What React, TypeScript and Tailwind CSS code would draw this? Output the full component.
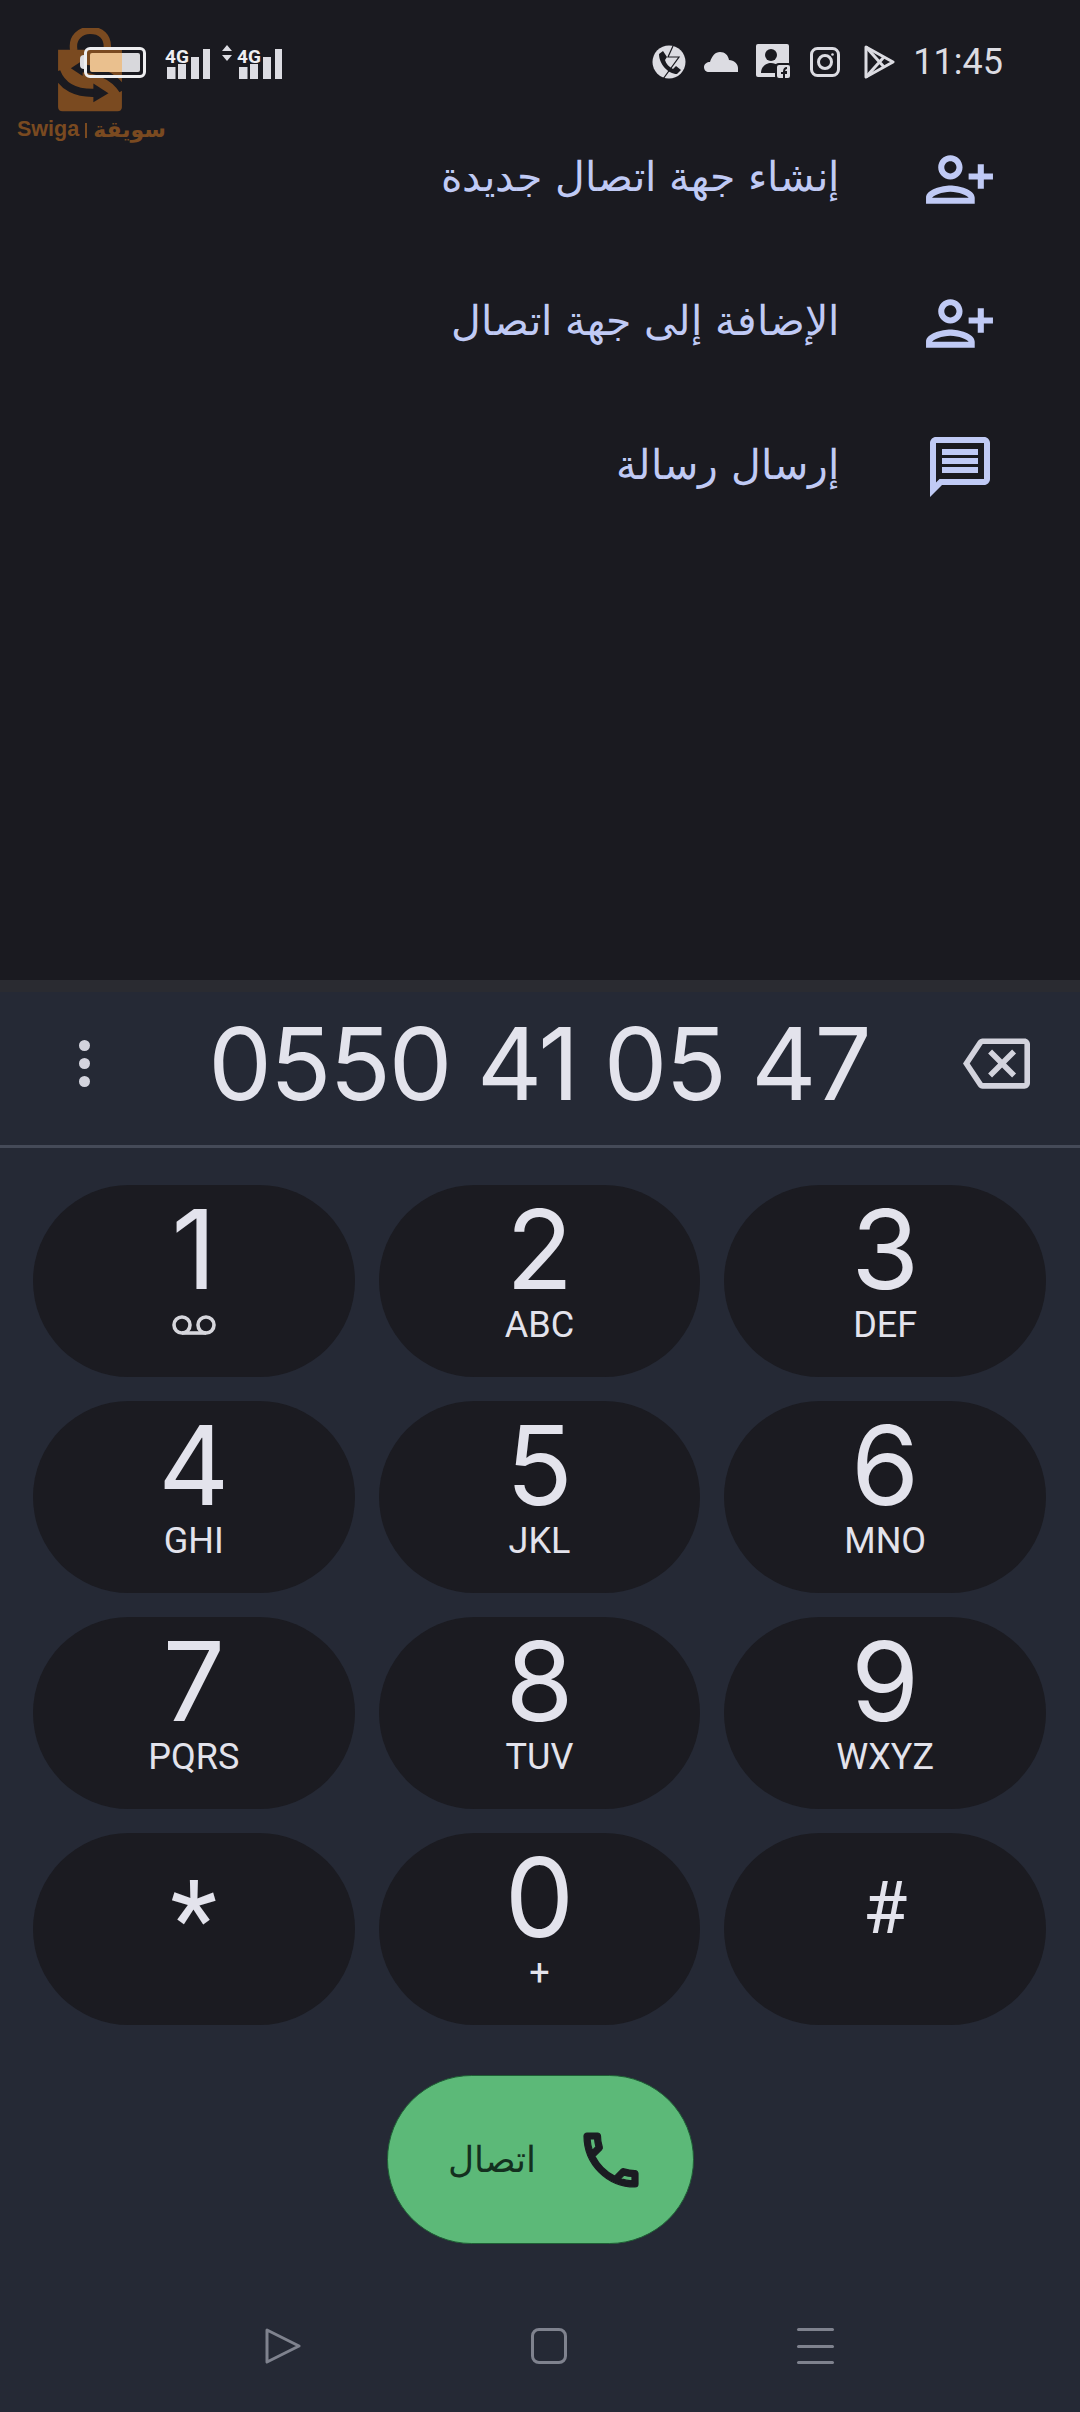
import React from "react";

const LILAC = "#c0caf5";
const BAG = "#7a4a20";
const BG = "#1a1a20";

function PersonAdd() {
  return (
    <svg viewBox="0 0 24 24" className="w-[73px] h-[73px]" fill={LILAC}>
      <g transform="translate(24,0) scale(-1,1)">
        <path d="M15 12c2.21 0 4-1.79 4-4s-1.79-4-4-4-4 1.79-4 4 1.79 4 4 4zm0-6c1.1 0 2 .9 2 2s-.9 2-2 2-2-.9-2-2 .9-2 2-2zm0 8c-2.67 0-8 1.34-8 4v2h16v-2c0-2.66-5.33-4-8-4zm-6 4c.22-.72 3.31-2 6-2 2.7 0 5.8 1.29 6 2H9zm-3-3v-3h3v-2H6V7H4v3H1v2h3v3h2z" />
      </g>
    </svg>
  );
}

function Message() {
  return (
    <svg viewBox="0 0 24 24" className="w-[72px] h-[72px]" fill={LILAC}>
      <path d="M20 2H4c-1.1 0-2 .9-2 2v18l4-4h14c1.1 0 2-.9 2-2V4c0-1.1-.9-2-2-2zm0 14H5.17L4 17.17V4h16v12zM6 12h12v2H6zm0-3h12v2H6zm0-3h12v2H6z" />
    </svg>
  );
}

function Row({ text, icon }: { text: string; icon: React.ReactNode }) {
  return (
    <div className="h-[144px] flex items-center justify-end">
      <span className="text-[41px] leading-none text-[#c0caf5] font-['DejaVu_Sans',sans-serif] font-extralight" dir="rtl">
        {text}
      </span>
      <div className="w-[73px] ml-[84px] mr-[84px] mt-[4px] flex justify-center">{icon}</div>
    </div>
  );
}

function Signal() {
  return (
    <svg viewBox="0 0 45 35" className="w-[45px] h-[35px]" fill="#dcdce2">
      <rect x="2" y="22" width="8.5" height="12" />
      <rect x="13" y="19" width="8" height="15" />
      <rect x="26" y="12" width="8" height="22" />
      <rect x="38" y="4" width="7" height="30" />
      <text x="0" y="18" fontSize="19" fontWeight="700" fontFamily="Roboto, sans-serif" fill="#eeeef2">4G</text>
    </svg>
  );
}

function Logo() {
  return (
    <svg viewBox="175 85 190 250" className="absolute left-[58px] top-[28px] w-[64px] h-[84px]">
      <path d="M222 152 C214 112 244 92 270 92 C300 92 326 108 321 150" fill="none" stroke={BAG} strokeWidth="22" />
      <path d="M175 150 H365 V320 C365 328 360 333 352 333 H188 C180 333 175 328 175 320 Z" fill={BAG} />
      <path d="M235 205 C285 205 340 225 368 270" fill="none" stroke={BG} strokeWidth="24" />
      <path d="M213 205 L248 182 V228 Z" fill={BG} />
      <path d="M170 215 C188 262 232 280 285 278" fill="none" stroke={BG} strokeWidth="24" />
      <path d="M280 250 L325 279 L280 306 Z" fill={BG} />
    </svg>
  );
}

function StatusBar() {
  return (
    <div className="h-[105px] relative flex items-center justify-between pl-[80px] pr-[77px] pt-[19px]">
      <Logo />
      <div className="absolute left-[17px] top-[119px] flex items-center gap-[6px] text-[#7a4a20] whitespace-nowrap leading-none">
        <span className="text-[21.5px] font-bold font-['Liberation_Sans',sans-serif]">Swiga</span>
        <span className="w-[2px] h-[15px] bg-[#7a4a20]" />
        <span className="text-[22px] font-bold font-['DejaVu_Sans',sans-serif]" dir="rtl">سويقة</span>
      </div>

      <div className="relative flex items-center">
        <div className="w-[4px] h-[14px] bg-[#dcdce2] rounded-l-sm" />
        <div className="w-[62px] h-[31px] rounded-[6px] border-[3px] border-[#eeeef0] p-[3px] flex">
          <div className="w-[32px] h-full rounded-l-[2px] bg-[#eac08e]" />
          <div className="flex-1 h-full rounded-r-[2px] bg-[#d8d8dc]" />
        </div>
        <div className="ml-[19px]"><Signal /></div>
        <svg viewBox="0 0 10 16" className="w-[10px] h-[16px] ml-[12px] mb-[18px]" fill="#dcdce2">
          <path d="M5 0 L10 6 H0 Z M0 10 H10 L5 16 Z" />
        </svg>
        <div className="ml-[5px]"><Signal /></div>
      </div>

      <div className="flex items-center">
        <svg viewBox="0 0 34 34" className="w-[34px] h-[34px]">
          <circle cx="17" cy="17" r="16.5" fill="#dcdce2" />
          <path d="M7 9 L11 6 L15 12 L13 15 C14 19 17 22 21 24 L24 21 L29 25 L25 29 C16 29 7 19 7 9 Z" fill={BG} />
          <path d="M21 1 L16 12 L27 12 L11 34" stroke={BG} strokeWidth="1.2" fill="none" />
        </svg>
        <svg viewBox="0 0 34 20" className="w-[34px] h-[20px] ml-[18px]" fill="#dcdce2">
          <path d="M5 20 C2 20 0 18 0 15 C0 12 3 10 6 10 C8 4 11 0 16 0 C21 0 24 3 25 8 C30 8 34 12 34 16 L34 20 Z" />
        </svg>
        <svg viewBox="0 0 36 36" className="w-[36px] h-[36px] ml-[18px]">
          <rect x="0" y="0" width="33" height="33" rx="2" fill="#dcdce2" />
          <circle cx="15" cy="11" r="6" fill={BG} />
          <path d="M5 29 C5 22 11 19 15 19 C18 19 20 20 22 21 L20 29 Z" fill={BG} />
          <rect x="20" y="20" width="15" height="15" rx="3" fill="#dcdce2" stroke={BG} strokeWidth="2" />
          <path d="M28 34 V28 H31 M25 29 H31 M28 28 C28 25 29 24 31 24" stroke={BG} strokeWidth="2" fill="none" />
        </svg>
        <svg viewBox="0 0 30 30" className="w-[30px] h-[30px] ml-[18px]" fill="none" stroke="#dcdce2" strokeWidth="3">
          <rect x="1.5" y="1.5" width="27" height="27" rx="6" />
          <circle cx="15" cy="15" r="6.5" />
          <circle cx="22.5" cy="7.5" r="1.3" fill="#dcdce2" stroke="none" />
        </svg>
        <svg viewBox="0 0 31 34" className="w-[31px] h-[34px] ml-[24px]" fill="none" stroke="#dcdce2" strokeWidth="3" strokeLinejoin="round">
          <path d="M2 2 L29 17 L2 32 Z" />
          <path d="M2 2 L20 22 M2 32 L20 12" />
        </svg>
        <span className="text-[36px] leading-none text-[#dcdce2] font-['Roboto',sans-serif] ml-[18px]">11:45</span>
      </div>
    </div>
  );
}

function Label({ children }: { children: React.ReactNode }) {
  return <div className="text-[36px] leading-[40px] font-['Roboto',sans-serif]">{children}</div>;
}

function Key({ d, l, voicemail }: { d: string; l?: string; voicemail?: boolean }) {
  return (
    <div className="h-[192px] rounded-[96px] bg-[#1b1b21] flex flex-col items-center text-[#e3e3ec]">
      <div className="h-[112px] mt-[8px] text-[110px] leading-[112px] font-[380] font-['Inter',sans-serif]">{d}</div>
      {voicemail ? (
        <svg viewBox="0 0 46 20" className="w-[46px] h-[20px] mt-[10px]" fill="none" stroke="#d6d6dc" strokeWidth="3.6">
          <circle cx="11" cy="10" r="8" />
          <circle cx="35" cy="10" r="8" />
          <path d="M11 18 H35" />
        </svg>
      ) : (
        <Label>{l}</Label>
      )}
    </div>
  );
}

function SymbolKey({ children }: { children: React.ReactNode }) {
  return <div className="h-[192px] rounded-[96px] bg-[#1b1b21] flex flex-col items-center text-[#e3e3ec] font-['Roboto',sans-serif]">{children}</div>;
}

export default function App() {
  return (
    <div className="w-[1080px] h-[2412px] bg-[#1a1a20] flex flex-col overflow-hidden">
      <div className="h-[980px]">
        <StatusBar />
        <Row text="إنشاء جهة اتصال جديدة" icon={<PersonAdd />} />
        <Row text="الإضافة إلى جهة اتصال" icon={<PersonAdd />} />
        <Row text="إرسال رسالة" icon={<Message />} />
      </div>
      <div className="flex-1 bg-[#252935] flex flex-col">
        <div className="h-[12px] bg-[#2a2b31]" />
        <div className="h-[156px] flex items-center border-b-[3px] border-[#454a58] pb-[10px]">
          <div className="w-[169px] flex flex-col items-center gap-[7px]">
            <div className="w-[11px] h-[11px] rounded-full bg-[#d3d3dd]" />
            <div className="w-[11px] h-[11px] rounded-full bg-[#d3d3dd]" />
            <div className="w-[11px] h-[11px] rounded-full bg-[#d3d3dd]" />
          </div>
          <div className="w-[740px] text-center text-[101px] leading-none tracking-[-2px] font-[380] text-[#e3e3ec] font-['Inter',sans-serif] whitespace-nowrap">
            0550 41 05 47
          </div>
          <svg viewBox="0 0 24 24" className="w-[67px] h-[67px] ml-[54px]" fill="#d3d3dd">
            <path d="M22 3H7c-.69 0-1.23.35-1.59.88L0 12l5.41 8.11c.36.53.9.89 1.59.89h15c1.1 0 2-.9 2-2V5c0-1.1-.9-2-2-2zm0 16H7.07L2.4 12l4.66-7H22v14zm-11.59-2L14 13.41 17.59 17 19 15.59 15.41 12 19 8.41 17.59 7 14 10.59 10.41 7 9 8.41 12.59 12 9 15.59z" />
          </svg>
        </div>
        <div className="grid grid-cols-3 gap-[24px] pl-[33px] pr-[34px] pt-[37px]">
          <Key d="1" voicemail />
          <Key d="2" l="ABC" />
          <Key d="3" l="DEF" />
          <Key d="4" l="GHI" />
          <Key d="5" l="JKL" />
          <Key d="6" l="MNO" />
          <Key d="7" l="PQRS" />
          <Key d="8" l="TUV" />
          <Key d="9" l="WXYZ" />
          <SymbolKey><div className="text-[108px] leading-[112px] mt-[31px]">*</div></SymbolKey>
          <Key d="0" l="+" />
          <SymbolKey><div className="text-[72px] leading-[80px] mt-[36px]">#</div></SymbolKey>
        </div>
        <div className="flex justify-center mt-[50px]">
          <div className="w-[307px] h-[169px] rounded-[85px] bg-[#5cb978] flex items-center justify-center gap-[39px] pl-[14px] border-[1px] border-[#1f5f35]">
            <span className="text-[36px] leading-none text-[#14301f] font-['DejaVu_Sans',sans-serif] font-extralight" dir="rtl">اتصال</span>
            <svg viewBox="0 0 24 24" className="w-[72px] h-[72px]" fill="#1b1c22" stroke="#1b1c22" strokeWidth="0.4">
              <path d="M6.54 5c.06.89.21 1.76.45 2.59l-1.2 1.2c-.41-1.2-.67-2.47-.76-3.79h1.51m9.86 12.02c.85.24 1.72.39 2.6.45v1.49c-1.32-.09-2.59-.35-3.8-.75l1.2-1.19M7.5 3H4c-.55 0-1 .45-1 1 0 9.39 7.61 17 17 17 .55 0 1-.45 1-1v-3.49c0-.55-.45-1-1-1-1.24 0-2.45-.2-3.57-.57-.1-.04-.21-.05-.31-.05-.26 0-.51.1-.71.29l-2.2 2.2c-2.83-1.45-5.15-3.76-6.59-6.59l2.2-2.2c.28-.28.36-.67.25-1.02C8.7 6.45 8.5 5.25 8.5 4c0-.55-.45-1-1-1z" />
            </svg>
          </div>
        </div>
        <div className="flex-1 flex items-start pt-[84px]">
          <div className="ml-[265px]">
            <svg viewBox="0 0 36 36" className="w-[36px] h-[36px]" fill="none" stroke="#7f828e" strokeWidth="3" strokeLinejoin="round">
              <path d="M2 2 L34 18 L2 34 Z" />
            </svg>
          </div>
          <div className="w-[36px] h-[36px] rounded-[8px] border-[3px] border-[#7f828e] ml-[230px]" />
          <div className="w-[37px] h-[36px] ml-[230px] flex flex-col justify-between">
            <div className="h-[3px] rounded-full bg-[#7f828e]" />
            <div className="h-[3px] rounded-full bg-[#7f828e]" />
            <div className="h-[3px] rounded-full bg-[#7f828e]" />
          </div>
        </div>
      </div>
    </div>
  );
}
